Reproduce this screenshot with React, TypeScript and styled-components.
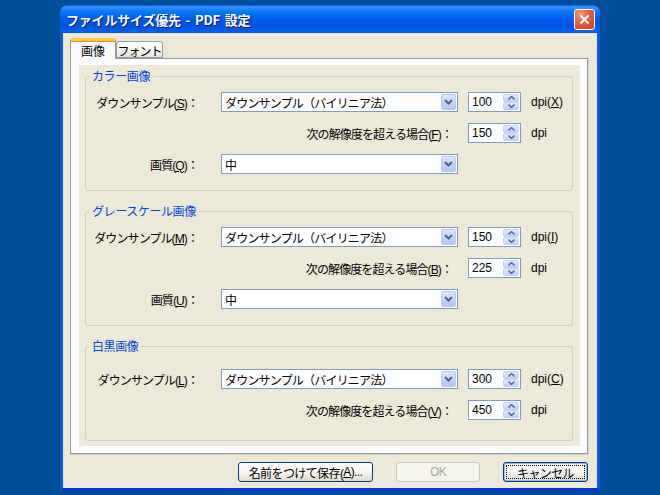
import styled, { createGlobalStyle } from 'styled-components';

const GlobalStyle = createGlobalStyle`
  html, body {
    margin: 0;
    padding: 0;
    background: #004e98;
  }
  body {
    font-family: "Liberation Sans", "Noto Sans CJK JP", sans-serif;
    font-size: 12px;
    color: #000;
  }
`;

const Desktop = styled.div`
  width: 660px;
  height: 495px;
  box-sizing: border-box;
  padding: 5px 0 0 60px;
  background: #004e98;
`;

const Window = styled.div`
  width: 540px;
  height: 486px;
  display: flex;
  flex-direction: column;
  border-radius: 8px 8px 0 0;
  overflow: hidden;
`;

const TitleBar = styled.div`
  height: 28px;
  flex: none;
  display: flex;
  align-items: center;
  justify-content: space-between;
  padding: 0 5px 0 6px;
  background: linear-gradient(
    180deg,
    #0058ee 0%,
    #3a93ff 7%,
    #288eff 12%,
    #127dff 20%,
    #036ffc 32%,
    #0262ee 44%,
    #0057e5 56%,
    #0054e3 70%,
    #0055eb 82%,
    #005bf5 90%,
    #0062ef 95%,
    #0052d6 100%
  );
`;

const Title = styled.div`
  color: #fff;
  font-family: "Noto Sans CJK JP", "Liberation Sans", sans-serif;
  font-weight: bold;
  font-size: 13px;
  letter-spacing: -0.2px;
  word-spacing: 2px;
  text-shadow: 1px 1px 0 #0a1883;
`;

const CloseButton = styled.div`
  width: 21px;
  height: 21px;
  box-sizing: border-box;
  border: 1px solid #fff;
  border-radius: 3px;
  display: flex;
  align-items: center;
  justify-content: center;
  background: radial-gradient(circle at 30% 25%, #f19c80 0%, #e2603a 45%, #c93c17 100%);
`;

const Body = styled.div`
  flex: 1;
  display: flex;
  flex-direction: column;
  background: #ece9d8;
  border: 3px solid #0a55ea;
  border-top: none;
  border-bottom-color: #0838c9;
  padding: 5px 9px 6px 7px;
`;

const TabStrip = styled.div`
  height: 20px;
  display: flex;
  align-items: flex-end;
`;

const Tab = styled.div<{ $active?: boolean; $w: number }>`
  position: relative;
  z-index: ${(p) => (p.$active ? 1 : 0)};
  width: ${(p) => p.$w}px;
  height: ${(p) => (p.$active ? 21 : 17)}px;
  margin-bottom: ${(p) => (p.$active ? -1 : 0)}px;
  box-sizing: border-box;
  display: flex;
  align-items: center;
  justify-content: center;
  font-family: "Noto Sans CJK JP", sans-serif;
  font-size: 12px;
  letter-spacing: ${(p) => (p.$active ? 0 : -1)}px;
  border: 1px solid #919b9c;
  border-bottom: ${(p) => (p.$active ? 'none' : '1px solid #919b9c')};
  border-top: ${(p) => (p.$active ? '3px solid #ffc83c' : '1px solid #919b9c')};
  border-radius: 3px 3px 0 0;
  padding-top: ${(p) => (p.$active ? 0 : 1)}px;
  background: ${(p) =>
    p.$active ? '#fcfcfe' : 'linear-gradient(180deg, #ffffff 0%, #f3f3ef 60%, #e5e4dc 100%)'};
  box-shadow: ${(p) => (p.$active ? 'inset 0 1px 0 #e68b2c' : 'none')};
`;

const TabPanel = styled.div`
  height: 396px;
  box-sizing: border-box;
  display: flex;
  flex-direction: column;
  border: 1px solid #919b9c;
  background: #fcfcfe;
  padding: 6px 7px 7px 8px;
  box-shadow: 1px 1px 0 #d6d3c6;
`;

const Page = styled.div`
  flex: 1;
  display: flex;
  flex-direction: column;
  gap: 14px;
  background: #ece9d8;
  padding: 5px 7px 0 6px;
`;

const Group = styled.fieldset<{ $pt: number; $pb: number }>`
  margin: 0;
  min-width: 0;
  border: 1px solid #d0d0bf;
  border-radius: 3px;
  padding: ${(p) => p.$pt}px 0 ${(p) => p.$pb}px 0;
`;

const Legend = styled.legend`
  margin-left: 3px;
  padding: 0 3px;
  font-family: "Noto Sans CJK JP", sans-serif;
  font-size: 12px;
  line-height: 12px;
  letter-spacing: -0.4px;
  color: #0046d5;
`;

const Rows = styled.div`
  display: grid;
  grid-template-columns: 125px 237px 53px auto;
  grid-auto-rows: 20px;
  column-gap: 10px;
  row-gap: 11px;
  align-items: center;
`;

const Label = styled.div<{ $wide?: boolean }>`
  grid-column: ${(p) => (p.$wide ? '1 / span 2' : 'auto')};
  text-align: right;
  padding-right: ${(p) => (p.$wide ? 6 : 13)}px;
  white-space: nowrap;
  letter-spacing: -0.9px;
`;

const Combo = styled.div`
  height: 20px;
  box-sizing: border-box;
  display: flex;
  align-items: center;
  border: 1px solid #7f9db9;
  background: #fff;
  padding: 1px;
`;

const ComboText = styled.div`
  flex: 1;
  padding-left: 2px;
  white-space: nowrap;
  letter-spacing: -0.8px;
`;

const DropButton = styled.div`
  width: 15px;
  height: 16px;
  box-sizing: border-box;
  display: flex;
  align-items: center;
  justify-content: center;
  border: 1px solid #b9cbf3;
  border-radius: 2px;
  background: linear-gradient(180deg, #dce6fd 0%, #c3d3fb 50%, #b2c6f6 100%);
`;

const Spin = styled.div`
  height: 20px;
  box-sizing: border-box;
  display: flex;
  align-items: center;
  border: 1px solid #7f9db9;
  background: #fff;
  padding: 1px;
`;

const SpinValue = styled.div`
  flex: 1;
  padding-left: 2px;
  font-size: 12px;
`;

const SpinButtons = styled.div`
  width: 16px;
  height: 16px;
  display: flex;
  flex-direction: column;
`;

const SpinHalf = styled.div`
  flex: 1;
  display: flex;
  align-items: center;
  justify-content: center;
  border: 1px solid #c4d3f6;
  border-radius: 2px;
  background: linear-gradient(180deg, #dfe8fd 0%, #bfd0f8 100%);
`;

const Unit = styled.div`
  white-space: nowrap;
`;

const ButtonRow = styled.div`
  display: flex;
  justify-content: flex-end;
  gap: 23px;
  margin-top: 8px;
`;

const Button = styled.div<{ $w: number; $disabled?: boolean; $focused?: boolean }>`
  width: ${(p) => p.$w}px;
  height: 20px;
  box-sizing: border-box;
  display: flex;
  align-items: center;
  justify-content: center;
  border: 1px solid ${(p) => (p.$disabled ? '#c9c7ba' : '#003c74')};
  border-radius: 3px;
  color: ${(p) => (p.$disabled ? '#aca899' : '#000')};
  background: ${(p) =>
    p.$disabled ? '#f5f4ea' : 'linear-gradient(180deg, #ffffff 0%, #f4f3ee 60%, #e3e0d6 90%, #d6d0c5 100%)'};
  box-shadow: ${(p) => (p.$focused ? 'inset 0 0 0 1px #9cb8ee' : 'none')};
  outline: ${(p) => (p.$focused ? '1px dotted #000' : 'none')};
  outline-offset: -4px;
  white-space: nowrap;
  letter-spacing: -0.6px;
`;

const Chevron = () => (
  <svg width="9" height="6" viewBox="0 0 9 6">
    <polyline points="1,1 4.5,4.5 8,1" fill="none" stroke="#4d6185" strokeWidth="2" />
  </svg>
);

const Caret = ({ up }: { up?: boolean }) => (
  <svg width="7" height="4" viewBox="0 0 7 4">
    <polyline
      points={up ? '0.5,3.5 3.5,0.5 6.5,3.5' : '0.5,0.5 3.5,3.5 6.5,0.5'}
      fill="none"
      stroke="#4d6185"
      strokeWidth="1.4"
    />
  </svg>
);

const ComboBox = ({ value }: { value: string }) => (
  <Combo>
    <ComboText>{value}</ComboText>
    <DropButton>
      <Chevron />
    </DropButton>
  </Combo>
);

const SpinBox = ({ value }: { value: string }) => (
  <Spin>
    <SpinValue>{value}</SpinValue>
    <SpinButtons>
      <SpinHalf>
        <Caret up />
      </SpinHalf>
      <SpinHalf>
        <Caret />
      </SpinHalf>
    </SpinButtons>
  </Spin>
);

const METHOD = 'ダウンサンプル（バイリニア法）';

export default function App() {
  return (
    <>
      <GlobalStyle />
      <Desktop>
        <Window>
          <TitleBar>
            <Title>ファイルサイズ優先 - PDF 設定</Title>
            <CloseButton>
              <svg width="11" height="11" viewBox="0 0 11 11">
                <path d="M1.5 1.5 L9.5 9.5 M9.5 1.5 L1.5 9.5" stroke="#fff" strokeWidth="2" />
              </svg>
            </CloseButton>
          </TitleBar>
          <Body>
            <TabStrip>
              <Tab $active $w={46}>画像</Tab>
              <Tab $w={47}>フォント</Tab>
            </TabStrip>
            <TabPanel>
              <Page>
                <Group $pt={10} $pb={16}>
                  <Legend>カラー画像</Legend>
                  <Rows>
                    <Label>ダウンサンプル(<u>S</u>)：</Label>
                    <ComboBox value={METHOD} />
                    <SpinBox value="100" />
                    <Unit>dpi(<u>X</u>)</Unit>
                    <Label $wide>次の解像度を超える場合(<u>F</u>)：</Label>
                    <SpinBox value="150" />
                    <Unit>dpi</Unit>
                    <Label>画質(<u>Q</u>)：</Label>
                    <ComboBox value="中" />
                  </Rows>
                </Group>
                <Group $pt={10} $pb={16}>
                  <Legend>グレースケール画像</Legend>
                  <Rows>
                    <Label>ダウンサンプル(<u>M</u>)：</Label>
                    <ComboBox value={METHOD} />
                    <SpinBox value="150" />
                    <Unit>dpi(<u>I</u>)</Unit>
                    <Label $wide>次の解像度を超える場合(<u>B</u>)：</Label>
                    <SpinBox value="225" />
                    <Unit>dpi</Unit>
                    <Label>画質(<u>U</u>)：</Label>
                    <ComboBox value="中" />
                  </Rows>
                </Group>
                <Group $pt={17} $pb={20}>
                  <Legend>白黒画像</Legend>
                  <Rows>
                    <Label>ダウンサンプル(<u>L</u>)：</Label>
                    <ComboBox value={METHOD} />
                    <SpinBox value="300" />
                    <Unit>dpi(<u>C</u>)</Unit>
                    <Label $wide>次の解像度を超える場合(<u>V</u>)：</Label>
                    <SpinBox value="450" />
                    <Unit>dpi</Unit>
                  </Rows>
                </Group>
              </Page>
            </TabPanel>
            <ButtonRow>
              <Button $w={135}>名前をつけて保存(<u>A</u>)...</Button>
              <Button $w={84} $disabled>OK</Button>
              <Button $w={85} $focused>キャンセル</Button>
            </ButtonRow>
          </Body>
        </Window>
      </Desktop>
    </>
  );
}
